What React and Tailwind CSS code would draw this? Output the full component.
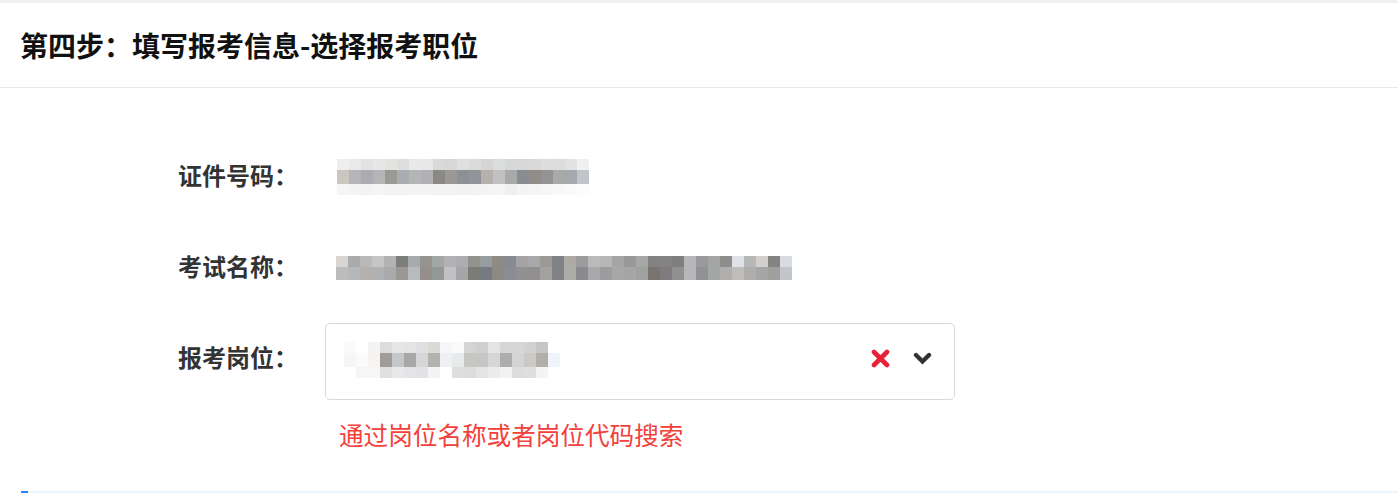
/**
 * Step 4 form: show ID number, exam name and a position select.
 * The personal values are pixelated in the screenshot, drawn as mosaics.
 */

const idRows = [
  ["#eeeeee", "#e9e9e9", "#e3e3e3", "#e7e7e9", "#e4e2df", "#dcdee0", "#e9e9e9", "#e8e8e8", "#d9d9d9", "#d7d7d7", "#dfdfdf", "#dbdbdb", "#d5d5d5", "#dbdddd", "#d5d7d9", "#d7d7d7", "#d9d9d9", "#dddddd", "#dbdddd", "#e2e2e2", "#eef0f1"],
  ["#cbc6c0", "#b5b5b9", "#a9adb1", "#b5b5b5", "#9b9995", "#a9adb1", "#b5b5b5", "#b1b1b5", "#8b8985", "#9b9995", "#8d9195", "#919599", "#b5b1ad", "#c1c1c1", "#a9a9a9", "#898d91", "#918d89", "#959391", "#a9a9a9", "#a5a9ad", "#c1c5c9"],
  ["#f6f6f6", "#f4f4f4", "#f3f3f4", "#f5f5f5", "#f3f3f3", "#f2f3f4", "#f4f4f4", "#f4f4f5", "#f3f3f3", "#f3f3f3", "#f2f2f3", "#f3f3f4", "#f4f4f4", "#f5f5f5", "#eff0f1", "#f4f4f4", "#f5f5f5", "#f7f7f7", "#f8f8f8", "#fafafa", "#fcfcfc"],
];

const examRows = [
  ["#d8d5d2", "#a9abad", "#b9b9b9", "#c6c6c6", "#b3b3b3", "#7d7d7b", "#a8abad", "#959390", "#a3a7a7", "#b5b2b4", "#adadb1", "#94928d", "#979c9f", "#8f8a84", "#868b91", "#a4a4a4", "#a9a8a9", "#9d9994", "#7f8184", "#aeaba5", "#9b9c9d", "#b9bab9", "#b7b7b7", "#a4a5a4", "#999999", "#a6a7a6", "#838282", "#838383", "#7f7f7f", "#b6b7ba", "#9c999c", "#a4a6a4", "#8d8d8b", "#dfe2e6", "#b7b7b7", "#d2cfcc", "#838383", "#d8dce0"],
  ["#bdbcbb", "#b7b8ba", "#b5b1ae", "#b0b1b2", "#a9aaa9", "#9b9894", "#b6bbbd", "#958f8b", "#929896", "#c3c0c5", "#a6a6a6", "#7d7b78", "#777b80", "#8d8a85", "#8a8d94", "#919191", "#918f8f", "#a4a29e", "#7f8184", "#acaca9", "#888a8d", "#aaa8a8", "#9b9c9f", "#a7a7a7", "#a6a6a6", "#9fa1a0", "#7a7470", "#7d7b7b", "#919191", "#b7b8bb", "#929293", "#a3a7a7", "#b0afad", "#bebdbc", "#aeadac", "#a6a6a6", "#9f9f9d", "#c2c6c8"],
];

const postRows = [
  ["#fafafa", "#ffffff", "#f4f4f4", "#dcdcdc", "#e6e6e6", "#e6e4e2", "#e0e0e2", "#dcdad6", "#f4f6f8", "#fafafa", "#d4d4d2", "#d0d0d0", "#e4e4e4", "#d6d6d6", "#d6d6d8", "#d4d2d0", "#c6c6c6", "#ffffff"],
  ["#f6f6f6", "#fbfbfb", "#f6f4f2", "#a09c9a", "#c4c6ca", "#aaa8a6", "#d6d6d8", "#b4b2ae", "#eef0f2", "#e8eaec", "#c6c6c4", "#c8c6c4", "#d6d6d8", "#aeacac", "#d4d4d4", "#cbc8c5", "#b2aea8", "#eef4f8"],
  ["#ffffff", "#f8f6f4", "#f4f6f8", "#e2e0de", "#e8e8ea", "#e4e4e6", "#e2e2e4", "#f2f4f6", "#ffffff", "#dededc", "#dcdcdc", "#e4e4e4", "#ececee", "#f2f2f2", "#dcdcdc", "#e0dfdd", "#f2f4f6", "#ffffff"],
];

function Mosaic({ rows, cell = 12, heights }) {
  const width = rows[0].length * cell;
  const height = heights.reduce((a, b) => a + b, 0);
  let y = 0;
  return (
    <svg width={width} height={height} className="block shrink-0">
      {rows.map((row, r) => {
        const top = y;
        y += heights[r];
        return row.map((c, i) => (
          <rect key={`${r}-${i}`} x={i * cell} y={top} width={cell} height={heights[r]} fill={c} />
        ));
      })}
    </svg>
  );
}

function ClearIcon() {
  return (
    <svg width="19" height="19" viewBox="0 0 19 19" className="block">
      <path d="M3 3 L16 16 M16 3 L3 16" stroke="#e8213b" strokeWidth="4.6" strokeLinecap="round" fill="none" />
    </svg>
  );
}

function ChevronIcon() {
  return (
    <svg width="19" height="13" viewBox="0 0 19 13" className="block">
      <path d="M3 3 L9.5 9.5 L16 3" stroke="#333333" strokeWidth="4.4" strokeLinecap="round" strokeLinejoin="miter" fill="none" />
    </svg>
  );
}

function Label({ children }) {
  return <div className="w-[147px] shrink-0 pl-[178px] box-content text-[24px] leading-[32px] font-bold text-[#333333]">{children}</div>;
}

export default function App() {
  return (
    <div className="min-h-screen bg-white font-['Microsoft_YaHei','Noto_Sans_CJK_SC',sans-serif]">
      <div className="h-[3px] bg-[#f0f0f0]" />

      {/* header */}
      <div className="h-[85px] flex items-center px-[20px] border-b border-[#e8e8e8]">
        <h1 className="text-[28px] font-bold text-[#111111]">第四步：填写报考信息-选择报考职位</h1>
      </div>

      {/* form */}
      <div className="flex flex-col">
        <div className="flex items-center h-[32px] mt-[71px]">
          <Label>证件号码：</Label>
          <div className="pl-[12px] pt-[4px]">
            <Mosaic rows={idRows} heights={[11, 14, 11]} />
          </div>
        </div>

        <div className="flex items-center h-[32px] mt-[59px]">
          <Label>考试名称：</Label>
          <div className="pl-[11px] pt-[4px]">
            <Mosaic rows={examRows} heights={[11, 13]} />
          </div>
        </div>

        <div className="flex items-start mt-[41px]">
          <Label>
            <span className="block mt-[18px]">报考岗位：</span>
          </Label>
          <div className="flex flex-col">
            <div className="w-[630px] h-[77px] border border-[#d9d9d9] rounded-[5px] flex items-center justify-between pl-[18px] pr-[22px]">
              <div className="pb-[4px]">
                <Mosaic rows={postRows} heights={[11, 14, 11]} />
              </div>
              <div className="flex items-center gap-[23px] pb-[6px]">
                <ClearIcon />
                <ChevronIcon />
              </div>
            </div>
            <p className="mt-[18px] pl-[14px] text-[24.6px] leading-[32px] text-[#f2413a]">通过岗位名称或者岗位代码搜索</p>
          </div>
        </div>

        <div className="mt-[41px] ml-[21px] h-[2px] bg-[#eef5fe] flex">
          <div className="w-[7px] bg-[#1e88f5]" />
        </div>
      </div>
    </div>
  );
}
